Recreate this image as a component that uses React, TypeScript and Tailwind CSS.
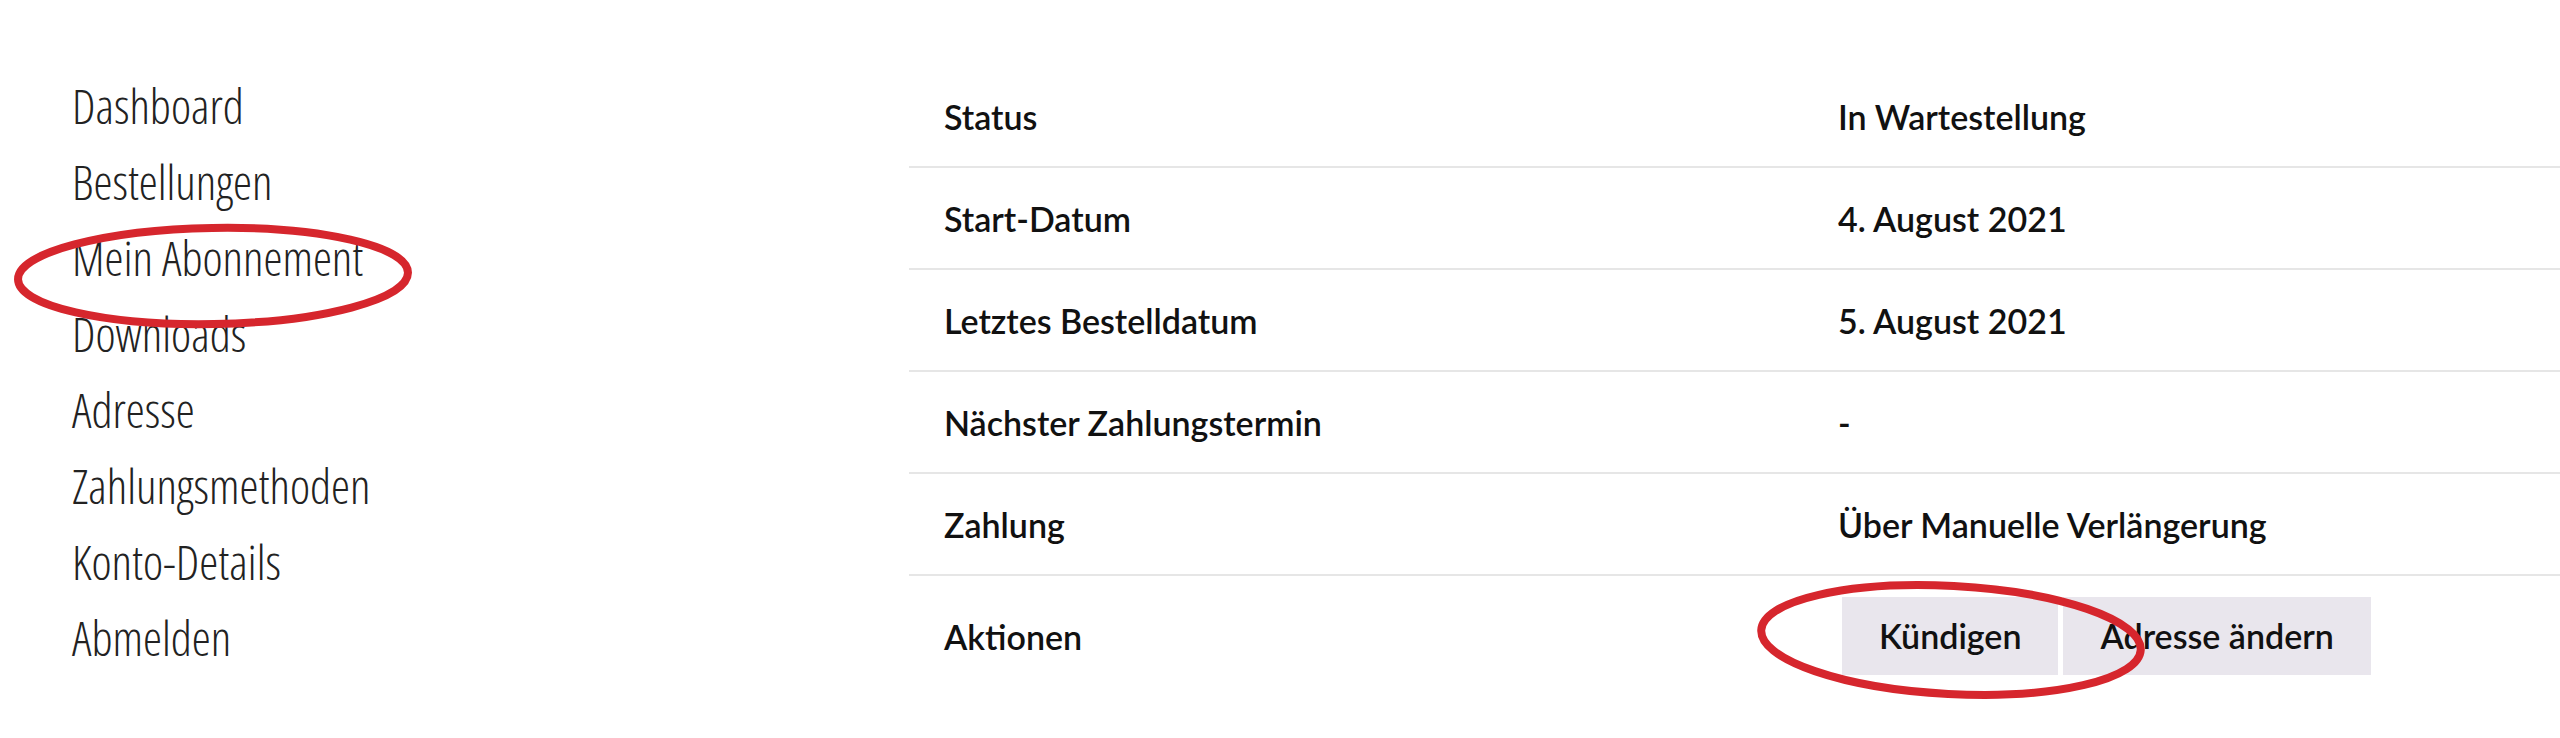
import React from "react";

const nav = [
  "Dashboard",
  "Bestellungen",
  "Mein Abonnement",
  "Downloads",
  "Adresse",
  "Zahlungsmethoden",
  "Konto-Details",
  "Abmelden",
];

const rows: [string, string][] = [
  ["Status", "In Wartestellung"],
  ["Start-Datum", "4. August 2021"],
  ["Letztes Bestelldatum", "5. August 2021"],
  ["Nächster Zahlungstermin", "-"],
  ["Zahlung", "Über Manuelle Verlängerung"],
];

export default function App() {
  return (
    <div className="relative w-[2560px] h-[738px] overflow-hidden bg-white">
      <div className="flex">
        <nav className="w-[909px] shrink-0 pl-[72px] pt-[68px]">
          <ul className="font-['Open_Sans',sans-serif] font-light font-stretch-condensed text-[48px] leading-[76px] text-[#222]">
            {nav.map((n) => (
              <li key={n}>{n}</li>
            ))}
          </ul>
        </nav>
        <div className="flex-1 pt-[66px] font-['Lato',sans-serif] font-semibold text-[34px] text-[#111]">
          {rows.map(([k, v]) => (
            <div key={k} className="flex h-[102px] items-center border-b-2 border-[#e6e6e6]">
              <div className="w-[894px] shrink-0 px-[35px]">{k}</div>
              <div className="px-[35px]">{v}</div>
            </div>
          ))}
          <div className="flex items-center py-[21px]">
            <div className="w-[894px] shrink-0 px-[35px]">Aktionen</div>
            <div className="flex gap-[5px] pl-[39px]">
              <button className="bg-[#e9e6ed] px-[37px] h-[78px] leading-[40px] font-semibold text-[#111]">
                Kündigen
              </button>
              <button className="bg-[#e9e6ed] px-[37px] h-[78px] leading-[40px] font-semibold text-[#111]">
                Adresse ändern
              </button>
            </div>
          </div>
        </div>
      </div>
      <svg
        className="absolute left-0 top-0 pointer-events-none"
        width="2560"
        height="738"
        viewBox="0 0 2560 738"
      >
        <ellipse
          cx="213"
          cy="276"
          rx="195"
          ry="48"
          fill="none"
          stroke="#d6262d"
          strokeWidth="8"
          transform="rotate(-1 213 276)"
        />
        <ellipse
          cx="1951"
          cy="640"
          rx="190"
          ry="54"
          fill="none"
          stroke="#d6262d"
          strokeWidth="8"
          transform="rotate(3 1951 640)"
        />
      </svg>
    </div>
  );
}
